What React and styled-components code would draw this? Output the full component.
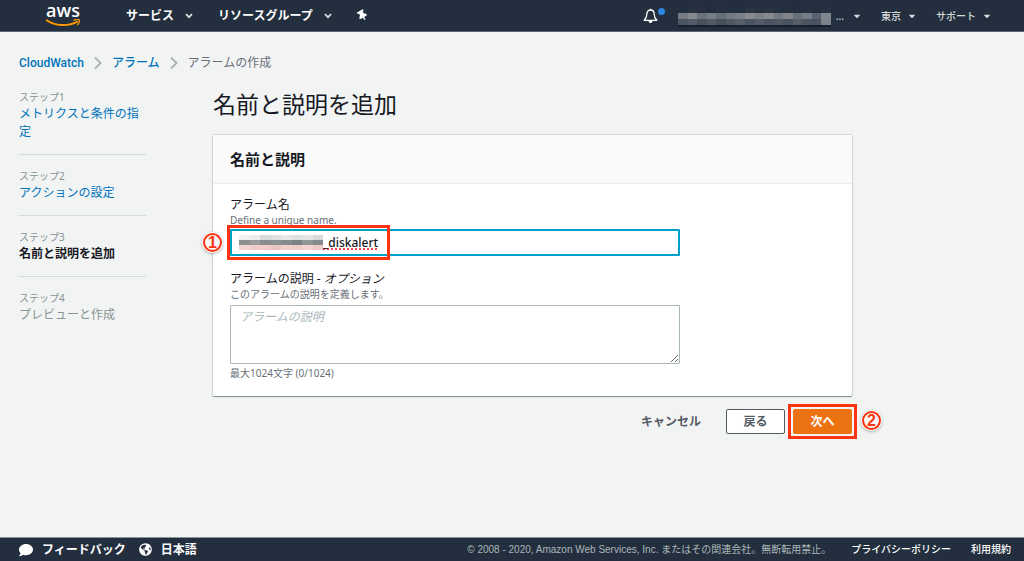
import React, { useState } from 'react';
import styled, { createGlobalStyle, css } from 'styled-components';
import { FaCaretDown, FaThumbtack, FaComment, FaGlobeAmericas } from 'react-icons/fa';

const GlobalStyle = createGlobalStyle`
    * {
        box-sizing: border-box;
    }

    body {
        margin: 0;
        background: #f2f3f3;
        color: #16191f;
        font-family: 'Noto Sans', 'Noto Sans CJK JP', sans-serif;
        font-size: 12px;
        line-height: 18px;
    }

    button, input, textarea {
        font-family: inherit;
    }
`;

const Page = styled.div`
    min-height: 100vh;
    display: flex;
    flex-direction: column;
`;

const Header = styled.header`
    display: flex;
    align-items: center;
    height: 32px;
    padding: 0 32px 0 46px;
    background: #232f3e;
    border-bottom: 1px solid #5a6672;
`;

const Logo = styled.a`
    display: flex;
    flex-direction: column;
    align-items: center;
    gap: 3px;
    width: 34px;
    margin-right: 46px;
    color: #fff;
    font-family: 'Open Sans', sans-serif;
    font-size: 18px;
    font-weight: 600;
    line-height: 12px;
    text-decoration: none;
`;

const Smile = styled.svg`
    display: block;
    width: 34px;
    height: 8px;
`;

const NavButton = styled.button`
    display: flex;
    align-items: center;
    gap: ${({ $small }) => ($small ? '6px' : '11px')};
    padding: 0;
    border: 0;
    background: none;
    color: ${({ $small }) => ($small ? '#d5dbdb' : '#fff')};
    font-size: ${({ $small }) => ($small ? '10px' : '12px')};
    font-weight: ${({ $small }) => ($small ? 500 : 700)};
    line-height: 18px;
    cursor: pointer;
`;

const Pin = styled(FaThumbtack)`
    transform: rotate(-30deg);
`;

const MainNav = styled.nav`
    display: flex;
    align-items: center;
    gap: 25px;
`;

const AccountNav = styled.nav`
    display: flex;
    align-items: center;
    gap: 19px;
    margin-left: auto;
`;

const BellButton = styled.button`
    position: relative;
    display: flex;
    width: 22px;
    padding: 0;
    border: 0;
    background: none;
    color: #fff;
`;

const Unread = styled.span`
    position: absolute;
    top: 0;
    right: 0;
    width: 7px;
    height: 7px;
    border-radius: 50%;
    background: #2e86e0;
`;

const Account = styled(NavButton)`
    gap: 5px;
    margin-left: -6px;

    svg:last-child {
        margin-left: 3px;
    }
`;

const Mosaic = styled.svg`
    display: block;
    flex: none;
    box-shadow: ${({ $shadow }) => ($shadow ? `0 2px ${$shadow}` : 'none')};
`;

const Body = styled.div`
    flex: 1;
    padding: 22px 19px;
`;

const Breadcrumbs = styled.nav`
    display: flex;
    align-items: center;
    gap: 10px;
    color: #687078;
    font-family: Roboto, 'Noto Sans CJK JP', sans-serif;
    font-size: 12px;
    font-weight: 500;
`;

const Link = styled.a`
    color: #0073bb;
    text-decoration: none;
`;

const Crumb = styled.span`
    font-weight: 400;
`;

const Columns = styled.div`
    display: grid;
    grid-template-columns: 127px minmax(0, 639px);
    column-gap: 67px;
    margin-top: 17px;
`;

const Steps = styled.ol`
    margin: 0;
    padding: 0;
    list-style: none;
`;

const Step = styled.li`
    padding-bottom: 13px;
    margin-bottom: 13px;
    border-bottom: 1px solid #d5dbdb;

    &:last-child {
        border-bottom: 0;
    }
`;

const StepNumber = styled.div`
    color: #879596;
    font-size: 10px;
    line-height: 16px;
`;

const StepTitle = styled.div`
    color: ${({ $active }) => ($active ? '#16191f' : '#879596')};
    font-weight: ${({ $active }) => ($active ? 700 : 400)};
`;

const Title = styled.h1`
    margin: 0 0 15px;
    font-size: 23px;
    font-weight: 400;
    line-height: 31px;
`;

const Panel = styled.section`
    background: #fff;
    border-radius: 1px;
    box-shadow: 0 1px 1px 0 rgba(0, 28, 36, 0.4), 0 0 1px 1px rgba(0, 28, 36, 0.12);
`;

const PanelHeader = styled.header`
    padding: 14px 17px;
    background: #fafafa;
    border-bottom: 1px solid #eaeded;
`;

const PanelTitle = styled.h2`
    margin: 0;
    font-size: 15px;
    line-height: 20px;
`;

const PanelBody = styled.div`
    padding: 13px 172px 16px 17px;
`;

const Field = styled.div`
    position: relative;
    margin-bottom: ${({ $last }) => ($last ? 0 : '15px')};
`;

const Label = styled.label`
    display: block;
    line-height: 16px;
`;

const Hint = styled.div`
    color: #687078;
    font-size: 10px;
    line-height: 14px;
`;

const control = css`
    display: block;
    width: 100%;
    border-radius: 1px;
    background: #fff;
    color: #16191f;
    font-size: 12px;
    line-height: 18px;
    outline: none;
`;

const NameBox = styled.div`
    ${control}
    position: relative;
    display: flex;
    align-items: center;
    height: 27px;
    margin-top: 2px;
    padding-left: 7px;
    border: 2px solid #00a1c9;
`;

const NameInput = styled.input`
    flex: 1;
    min-width: 0;
    padding: 0;
    border: 0;
    outline: none;
    background: none;
    color: #16191f;
    font-size: 12px;
    font-weight: 500;
    line-height: 18px;
    text-decoration-line: underline;
    text-decoration-style: dotted;
    text-decoration-color: #f0444a;
    text-decoration-thickness: 2px;
    text-decoration-skip-ink: none;
    text-underline-offset: 2px;
`;

const Description = styled.textarea`
    ${control}
    height: 59px;
    margin: 4px 0 2px;
    padding: 2px 9px;
    border: 1px solid #aab7b8;
    resize: vertical;

    &::placeholder {
        color: #aab7b8;
        font-style: italic;
    }
`;

const Actions = styled.div`
    display: flex;
    justify-content: flex-end;
    gap: 8px;
    margin-top: 13px;
`;

const Button = styled.button`
    min-width: 59px;
    height: 25px;
    padding: 0 16px;
    border: 1px solid ${({ $kind }) => ({ normal: '#545b64', primary: '#ec7211' }[$kind] || 'transparent')};
    border-radius: 2px;
    background: ${({ $kind }) => ({ normal: '#fff', primary: '#ec7211' }[$kind] || 'transparent')};
    color: ${({ $kind }) => ($kind === 'primary' ? '#fff' : '#545b64')};
    font-size: 12px;
    font-weight: 700;
    line-height: 18px;
    cursor: pointer;
`;

const Marked = styled.div`
    position: relative;
`;

const Outline = styled.span`
    position: absolute;
    inset: ${({ $inset }) => $inset};
    width: ${({ $width }) => $width || 'auto'};
    border: 3px solid #fc3412;
    pointer-events: none;
`;

const Marker = styled.span`
    position: absolute;
    top: 2px;
    left: ${({ $left }) => $left};
    display: flex;
    align-items: center;
    justify-content: center;
    width: 19px;
    height: 19px;
    border: 2px solid #fc3412;
    border-radius: 50%;
    background: #f7f7f7;
    box-shadow: 0 0 0 1px #fff, 0 1px 3px 1px rgba(0, 0, 0, 0.3);
    color: #fc3412;
    font-family: 'Liberation Sans', sans-serif;
    font-size: 16px;
    font-weight: 700;
    line-height: 15px;
`;

const Footer = styled.footer`
    display: flex;
    align-items: center;
    height: 24px;
    padding: 0 13px 0 19px;
    background: #232f3e;
    border-top: 1px solid #8d959c;
    color: #aab7b8;
    font-family: 'Liberation Sans', 'Noto Sans CJK JP', sans-serif;
    font-size: 10px;
`;

const FooterButton = styled.button`
    display: flex;
    align-items: center;
    gap: 9px;
    margin-right: 13px;
    padding: 0;
    border: 0;
    background: none;
    color: #fff;
    font-size: 12px;
    font-weight: 700;
    line-height: 18px;
    cursor: pointer;
`;

const Copyright = styled.small`
    margin-left: auto;
    font-size: 10px;
`;

const FooterLink = styled.a`
    margin-left: 20px;
    color: #fff;
    font-weight: 500;
    text-decoration: none;
`;

const accountTones = [
    ['#242f3d', '#27313f', '#252f3d', '#232e3c', '#26303e', '#242f3d', '#232e3c', '#2a3441', '#252f3d', '#2a3441', '#26313f', '#252f3d', '#232e3c', '#26303e', '#232e3c', '#27313f'],
    ['#777c84', '#858990', '#6c727b', '#777d85', '#656d77', '#747a83', '#7a8088', '#868b91', '#7c8189', '#858a90', '#737982', '#80858c', '#68707a', '#767c84', '#59626e', '#80868d'],
    ['#4c5562', '#535c68', '#474f5d', '#525a66', '#454f5c', '#4e5763', '#555e69', '#4b5461', '#555d68', '#4b5461', '#505965', '#4a5360', '#565e69', '#4b5461', '#485260', '#7c8289'],
];

const nameTones = [
    ['#f0f1f1', '#eceded', '#d9dcdd', '#dedfdf', '#e6e7e7', '#dfe2e3', '#e4e6e6', '#d9dbdb'],
    ['#8b8f90', '#9b9d9d', '#898d8e', '#8b9091', '#858b8c', '#7a8285', '#919697', '#858a8b'],
    ['#f4d5d1', '#eecdc9', '#f2cdc9', '#e8c5c1', '#f2d0cc', '#efccc8', '#f3d4d0', '#efcac6'],
];

const Redacted = ({ tones, width, rowHeight, shadow }) => (
    <Mosaic width={width} height={tones.length * rowHeight} $shadow={shadow} shapeRendering="crispEdges" aria-hidden="true">
        {tones.map((row, y) => row.map((fill, x) => (
            <rect
                key={`${x}-${y}`}
                x={(x * width) / row.length}
                y={y * rowHeight}
                width={width / row.length + 1}
                height={rowHeight}
                fill={fill}
            />
        )))}
    </Mosaic>
);

const Separator = () => (
    <svg width="8" height="14" viewBox="0 0 8 14" fill="none" stroke="#aab7b8" strokeWidth="2" aria-hidden="true">
        <path d="M1 1.5 6.5 7 1 12.5" />
    </svg>
);

const Chevron = () => (
    <svg width="8" height="6" viewBox="0 0 8 6" fill="none" stroke="#d5dbdb" strokeWidth="1.8" aria-hidden="true">
        <path d="M1 1.2 4 4.2 7 1.2" />
    </svg>
);

const Bell = () => (
    <svg width="15" height="16" viewBox="0 0 15 16" fill="none" stroke="currentColor" strokeWidth="1.3" aria-hidden="true">
        <path d="M7.5 2C4.8 2 3.8 4 3.8 6.3c0 3.2-.7 4.3-2.6 6h12.6c-1.9-1.7-2.6-2.8-2.6-6C11.2 4 10.2 2 7.5 2Z" strokeLinejoin="round" />
        <path d="M6.7 1.5h1.6" />
        <path d="M5.5 13h4a2 2 0 0 1-4 0Z" fill="currentColor" stroke="none" />
    </svg>
);

const steps = [
    { title: 'メトリクスと条件の指定', link: true },
    { title: 'アクションの設定', link: true },
    { title: '名前と説明を追加', active: true },
    { title: 'プレビューと作成' },
];

const App = () => {
    const [name, setName] = useState('_diskalert');
    const [description, setDescription] = useState('');

    return (
        <Page>
            <GlobalStyle />
            <Header>
                <Logo href="#">
                    aws
                    <Smile viewBox="0 0 34 8" fill="none" aria-hidden="true">
                        <path d="M.6 1.2C9 7 22 7.6 31 2.8" stroke="#f90" strokeWidth="1.9" strokeLinecap="round" />
                        <path d="M28 1.2c2-.8 4.5-.9 5.2-.3.5.7-.1 3.5-1.7 5" stroke="#f90" strokeWidth="1.3" strokeLinecap="round" />
                    </Smile>
                </Logo>
                <MainNav>
                    <NavButton>サービス<Chevron /></NavButton>
                    <NavButton>リソースグループ<Chevron /></NavButton>
                    <NavButton aria-label="ピン"><Pin size={11} /></NavButton>
                </MainNav>
                <AccountNav>
                    <BellButton aria-label="通知"><Bell /><Unread /></BellButton>
                    <Account $small>
                        <Redacted tones={accountTones} width={153} rowHeight={6} shadow="#14202e" />
                        ...
                        <FaCaretDown size={10} />
                    </Account>
                    <NavButton $small>東京<FaCaretDown size={10} /></NavButton>
                    <NavButton $small>サポート<FaCaretDown size={10} /></NavButton>
                </AccountNav>
            </Header>

            <Body>
                <Breadcrumbs>
                    <Link href="#">CloudWatch</Link>
                    <Separator />
                    <Link href="#">アラーム</Link>
                    <Separator />
                    <Crumb>アラームの作成</Crumb>
                </Breadcrumbs>
                <Columns>
                    <Steps>
                        {steps.map((step, i) => (
                            <Step key={step.title}>
                                <StepNumber>ステップ{i + 1}</StepNumber>
                                <StepTitle $active={step.active}>
                                    {step.link ? <Link href="#">{step.title}</Link> : step.title}
                                </StepTitle>
                            </Step>
                        ))}
                    </Steps>
                    <main>
                        <Title>名前と説明を追加</Title>
                        <Panel>
                            <PanelHeader>
                                <PanelTitle>名前と説明</PanelTitle>
                            </PanelHeader>
                            <PanelBody>
                                <Field>
                                    <Label htmlFor="name">アラーム名</Label>
                                    <Hint>Define a unique name.</Hint>
                                    <NameBox>
                                        <Redacted tones={nameTones} width={84} rowHeight={5} />
                                        <NameInput id="name" value={name} spellCheck={false} onChange={(e) => setName(e.target.value)} />
                                        <Outline $inset="-6px auto -6px -5px" $width="163px" />
                                        <Marker $left="-29px">1</Marker>
                                    </NameBox>
                                </Field>
                                <Field $last>
                                    <Label htmlFor="description">アラームの説明 - <i>オプション</i></Label>
                                    <Hint>このアラームの説明を定義します。</Hint>
                                    <Description
                                        id="description"
                                        placeholder="アラームの説明"
                                        value={description}
                                        onChange={(e) => setDescription(e.target.value)}
                                    />
                                    <Hint>最大1024文字 ({description.length}/1024)</Hint>
                                </Field>
                            </PanelBody>
                        </Panel>
                        <Actions>
                            <Button>キャンセル</Button>
                            <Button $kind="normal">戻る</Button>
                            <Marked>
                                <Button $kind="primary">次へ</Button>
                                <Outline $inset="-5px" />
                                <Marker $left="69px">2</Marker>
                            </Marked>
                        </Actions>
                    </main>
                </Columns>
            </Body>

            <Footer>
                <FooterButton><FaComment size={14} />フィードバック</FooterButton>
                <FooterButton><FaGlobeAmericas size={13} />日本語</FooterButton>
                <Copyright>© 2008 - 2020, Amazon Web Services, Inc. またはその関連会社。無断転用禁止。</Copyright>
                <FooterLink href="#">プライバシーポリシー</FooterLink>
                <FooterLink href="#">利用規約</FooterLink>
            </Footer>
        </Page>
    );
};

export default App;
